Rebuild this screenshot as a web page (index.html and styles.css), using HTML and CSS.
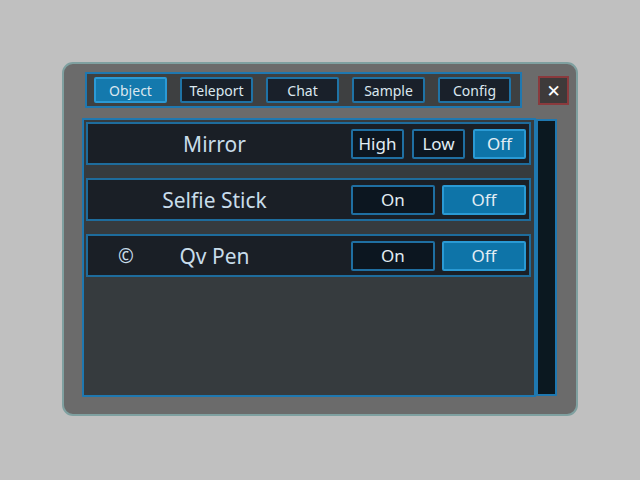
FILE: index.html
```html
<!DOCTYPE html>
<html>
<head>
<meta charset="utf-8">
<link rel="stylesheet" href="styles.css">
</head>
<body>
<div class="panel">
  <div class="header">
    <div class="tabbar">
      <div class="tab active">Object</div>
      <div class="tab">Teleport</div>
      <div class="tab">Chat</div>
      <div class="tab">Sample</div>
      <div class="tab">Config</div>
    </div>
    <div class="close">✕</div>
  </div>
  <div class="body">
    <div class="list">
      <div class="row">
        <div class="label"><span class="icon"></span><span class="name">Mirror</span><span></span></div>
        <div class="buttons">
          <div class="btn small">High</div>
          <div class="btn small">Low</div>
          <div class="btn small on">Off</div>
        </div>
      </div>
      <div class="row">
        <div class="label"><span class="icon"></span><span class="name">Selfie Stick</span><span></span></div>
        <div class="buttons">
          <div class="btn wide">On</div>
          <div class="btn wide on">Off</div>
        </div>
      </div>
      <div class="row">
        <div class="label"><span class="icon">©</span><span class="name">Qv Pen</span><span></span></div>
        <div class="buttons">
          <div class="btn wide">On</div>
          <div class="btn wide on">Off</div>
        </div>
      </div>
    </div>
    <div class="scrollbar"></div>
  </div>
</div>
</body>
</html>
```

FILE: styles.css
```css
* { box-sizing: border-box; }
html, body { margin: 0; padding: 0; }
body {
  width: 640px;
  height: 480px;
  background: #c0c0c0;
  font-family: "Noto Sans", "DejaVu Sans", sans-serif;
  padding: 62px 0 0 62px;
}
.panel {
  width: 516px;
  height: 354px;
  background: #6b6b6b;
  border: 2px solid #7fa0a0;
  border-radius: 11px;
  padding: 8px 0 0 18px;
}
.header {
  display: flex;
  align-items: flex-start;
}
.tabbar {
  margin-left: 3px;
  width: 437px;
  height: 36px;
  background: #3e4041;
  border: 2px solid #1f78b0;
  display: flex;
  align-items: center;
  gap: 13px;
  padding-left: 7px;
}
.tab {
  width: 73px;
  height: 26px;
  background: #19202a;
  border: 2px solid #1f73a6;
  border-radius: 2px;
  color: #dbe7ef;
  font-size: 14px;
  display: flex;
  align-items: center;
  justify-content: center;
}
.tab.active {
  background: #1479ad;
  border-color: #2b9ad6;
}
.close {
  margin: 4px 0 0 16px;
  width: 31px;
  height: 29px;
  background: #3e3a3a;
  border: 2px solid #8a3a3d;
  color: #ffffff;
  font-size: 17px;
  display: flex;
  align-items: center;
  justify-content: center;
}
.body {
  display: flex;
  align-items: flex-start;
  margin-top: 10px;
}
.list {
  width: 454px;
  height: 279px;
  background: #363b3e;
  border: 2px solid #1f78b0;
  padding: 2px 3px 0 2px;
  display: flex;
  flex-direction: column;
  gap: 13px;
}
.row {
  height: 43px;
  background: #1a1f26;
  border: 2px solid #1e6c9c;
  display: flex;
  align-items: center;
  padding-right: 3px;
}
.label {
  flex: 1;
  display: grid;
  grid-template-columns: 1fr auto 1fr;
  align-items: center;
  padding-right: 10px;
  color: #c8dcea;
  font-size: 21px;
  white-space: nowrap;
}
.icon {
  padding-left: 30px;
  font-size: 19px;
}
.buttons {
  display: flex;
  gap: 8px;
}
.btn {
  height: 30px;
  background: #0c1620;
  border: 2px solid #1f6fa2;
  border-radius: 2px;
  color: #e2edf4;
  font-size: 17px;
  display: flex;
  align-items: center;
  justify-content: center;
}
.btn.small { width: 53px; }
.btn.wide { width: 84px; }
.buttons .btn.wide + .btn.wide { margin-left: -1px; }
.btn.on {
  background: #0e74a8;
  border-color: #2a9ad4;
}
.scrollbar {
  width: 21px;
  height: 277px;
  margin-top: 1px;
  background: #0b1820;
  border: 2px solid #1f78b0;
}
```
